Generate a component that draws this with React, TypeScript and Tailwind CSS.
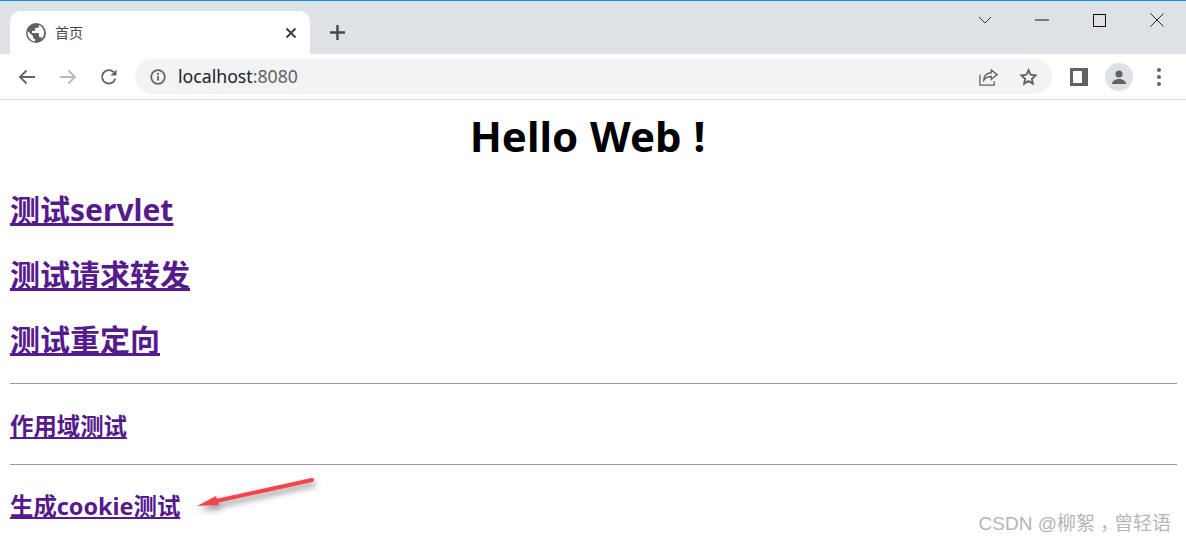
import React from "react";

const cjk = "font-['Microsoft_YaHei','Noto_Sans','Noto_Sans_CJK_SC',sans-serif]";
const ui = "font-['Noto_Sans','Noto_Sans_CJK_SC',sans-serif]";

function Globe() {
  return (
    <svg width="20" height="20" viewBox="2 2 20 20" fill="#5f6368">
      <path fillRule="evenodd" d="M12 2a10 10 0 1 0 0 20 10 10 0 0 0 0-20zM3.500 12c0-.6.1-1.200.2-1.800L9 15v1c0 1.100.9 2 2 2v2.500A8.500 8.500 0 0 1 3.500 12zm14.400 5.400c-.3-.8-1-1.400-1.900-1.400h-1v-3c0-.6-.4-1-1-1H8v-2h2c.6 0 1-.4 1-1V7h2c1.100 0 2-.9 2-2V4a8.500 8.500 0 0 1 2.900 13.400z" />
    </svg>
  );
}

function TabBar() {
  return (
    <div className="h-[54px] bg-[#dee1e6] border-t border-[#1a8ae0] flex items-start shrink-0">
      <div className="ml-[10px] mt-[10px] w-[300px] h-[43px] bg-white rounded-t-[10px] flex items-center pl-[16px] pr-[13px]">
        <Globe />
        <span className={`ml-[9px] text-[14px] text-[#45474a] flex-1 ${ui}`}>首页</span>
        <svg width="12" height="12" viewBox="0 0 12 12" stroke="#3c4043" strokeWidth="2" fill="none">
          <path d="M1.500 1.500l9 9M10.500 1.500l-9 9" />
        </svg>
      </div>
      <div className="ml-[20px] mt-[24px]">
        <svg width="15" height="15" viewBox="0 0 15 15" stroke="#46494d" strokeWidth="2.400" fill="none">
          <path d="M7.500 0v15M0 7.500h15" />
        </svg>
      </div>
      <div className="ml-auto flex items-center h-[38px]">
        <div className="w-[58px] flex justify-center">
          <svg width="14" height="8" viewBox="0 0 14 8" stroke="#333" fill="none"><path d="M1 1l6 6 6-6" /></svg>
        </div>
        <div className="w-[56px] flex justify-center">
          <svg width="14" height="2" viewBox="0 0 14 2" stroke="#111" fill="none"><path d="M0 1h14" /></svg>
        </div>
        <div className="w-[58px] flex justify-center">
          <div className="w-[13px] h-[13px] border border-[#111]" />
        </div>
        <div className="w-[58px] flex justify-center">
          <svg width="14" height="14" viewBox="0 0 14 14" stroke="#222" fill="none"><path d="M.5.500l13 13M13.500.500l-13 13" /></svg>
        </div>
      </div>
    </div>
  );
}

function Toolbar() {
  return (
    <div className="h-[46px] bg-white border-b border-[#dadce0] flex items-center shrink-0 relative">
      <div className="w-[135px] pl-[18px] flex items-center gap-[23px] shrink-0">
        <svg width="18" height="16" viewBox="0 0 18 16" stroke="#5f6368" strokeWidth="1.800" fill="none">
          <path d="M17 8H2M8.500 1.500L2 8l6.500 6.500" />
        </svg>
        <svg width="18" height="16" viewBox="0 0 18 16" stroke="#b8babd" strokeWidth="1.800" fill="none">
          <path d="M1 8h15M9.500 1.500L16 8l-6.500 6.500" />
        </svg>
        <svg width="18" height="18" viewBox="0 0 18 18" fill="none">
          <path d="M15.300 10.500A6.700 6.700 0 1 1 13.700 4.200" stroke="#5f6368" strokeWidth="1.800" />
          <path d="M16.500 1.500v6h-6z" fill="#5f6368" />
        </svg>
      </div>
      <div className="w-[917px] h-[35px] bg-[#f1f3f4] rounded-full flex items-center pl-[15px] shrink-0">
        <svg width="16" height="16" viewBox="0 0 16 16" fill="none">
          <circle cx="8" cy="8" r="6.800" stroke="#5f6368" strokeWidth="1.700" />
          <path d="M8 7v4.500" stroke="#5f6368" strokeWidth="1.800" />
          <circle cx="8" cy="4.900" r="1.100" fill="#5f6368" />
        </svg>
        <span className={`ml-[12px] text-[17.700px] leading-none ${ui}`}>
          <span className="text-[#202124]">localhost</span>
          <span className="text-[#5f6368]">:8080</span>
        </span>
        <div className="ml-auto flex items-center gap-[21px] pr-[14px]">
          <svg width="19" height="18" viewBox="0 0 20 19" fill="none" stroke="#5f6368" strokeWidth="1.400">
            <path d="M1 7v11h15v-4" />
            <path d="M13 2l6 5-6 5V9c-4 0-6 1-8 4 0-5 3-7.500 8-8z" />
          </svg>
          <svg width="19" height="18" viewBox="0 0 24 24" fill="none" stroke="#5f6368" strokeWidth="2.500">
            <path d="M12 3l2.800 6 6.600.8-4.900 4.500 1.300 6.500L12 17.500 6.200 20.800l1.300-6.500L2.600 9.800 9.200 9z" />
          </svg>
        </div>
      </div>
      <div className="ml-[18px] w-[18px] h-[18px] bg-[#5f6368] flex justify-start items-center pl-[3px]">
        <div className="w-[9px] h-[12px] bg-white" />
      </div>
      <div className="ml-[17px] w-[28px] h-[28px] rounded-full bg-[#dee1e6] flex items-center justify-center">
        <svg width="18" height="18" viewBox="0 0 18 18" fill="#5f6368">
          <circle cx="9" cy="6" r="3.500" />
          <path d="M2 16c0-3.500 4-5 7-5s7 1.500 7 5z" />
        </svg>
      </div>
      <div className="ml-[24px] flex flex-col gap-[3px]">
        <div className="w-[4px] h-[4px] rounded-full bg-[#5f6368]" />
        <div className="w-[4px] h-[4px] rounded-full bg-[#5f6368]" />
        <div className="w-[4px] h-[4px] rounded-full bg-[#5f6368]" />
      </div>
    </div>
  );
}

function Arrow() {
  return (
    <svg className="absolute left-[190px] top-[470px] drop-shadow-[2px_4px_3px_rgba(0,0,0,0.45)]" width="135" height="50" viewBox="0 0 135 50" fill="none">
      <path d="M122 10L24 31.500" stroke="#f9424a" strokeWidth="4" strokeLinecap="round" />
      <path d="M7 36l19-10 3 9z" fill="#f9424a" />
    </svg>
  );
}

export default function App() {
  const link = "text-[#551a8b] underline";
  return (
    <div className={`w-[1186px] h-[543px] bg-white relative overflow-hidden flex flex-col text-black ${cjk}`}>
      <TabBar />
      <Toolbar />
      <main className="pl-[10px] pr-[9px] flex flex-col">
        <h1 className="text-center font-bold text-[42px] leading-[54px] mt-[9px] pr-[12px] [word-spacing:1px]">Hello Web !</h1>
        <h2 className="font-bold text-[30px] leading-[40px] mt-[27px]"><a className={link} href="#">测试servlet</a></h2>
        <h2 className="font-bold text-[30px] leading-[40px] mt-[25px]"><a className={link} href="#">测试请求转发</a></h2>
        <h2 className="font-bold text-[30px] leading-[40px] mt-[25px]"><a className={link} href="#">测试重定向</a></h2>
        <hr className="border-t border-[#999] mt-[23px]" />
        <h3 className="font-bold text-[23.400px] leading-[32px] mt-[26px]"><a className={link} href="#">作用域测试</a></h3>
        <hr className="border-t border-[#999] mt-[22px]" />
        <h3 className="font-bold text-[23.400px] leading-[32px] mt-[25px]"><a className={link} href="#">生成cookie测试</a></h3>
      </main>
      <Arrow />
      <div className="absolute right-[15px] top-[511px] text-[19px] leading-[26px] text-[#b5b5b5] font-['Liberation_Sans','Noto_Sans_CJK_SC',sans-serif] whitespace-pre">CSDN @柳絮<span className="ml-[5px] tracking-[-5px]">，</span>曾轻语</div>
    </div>
  );
}
